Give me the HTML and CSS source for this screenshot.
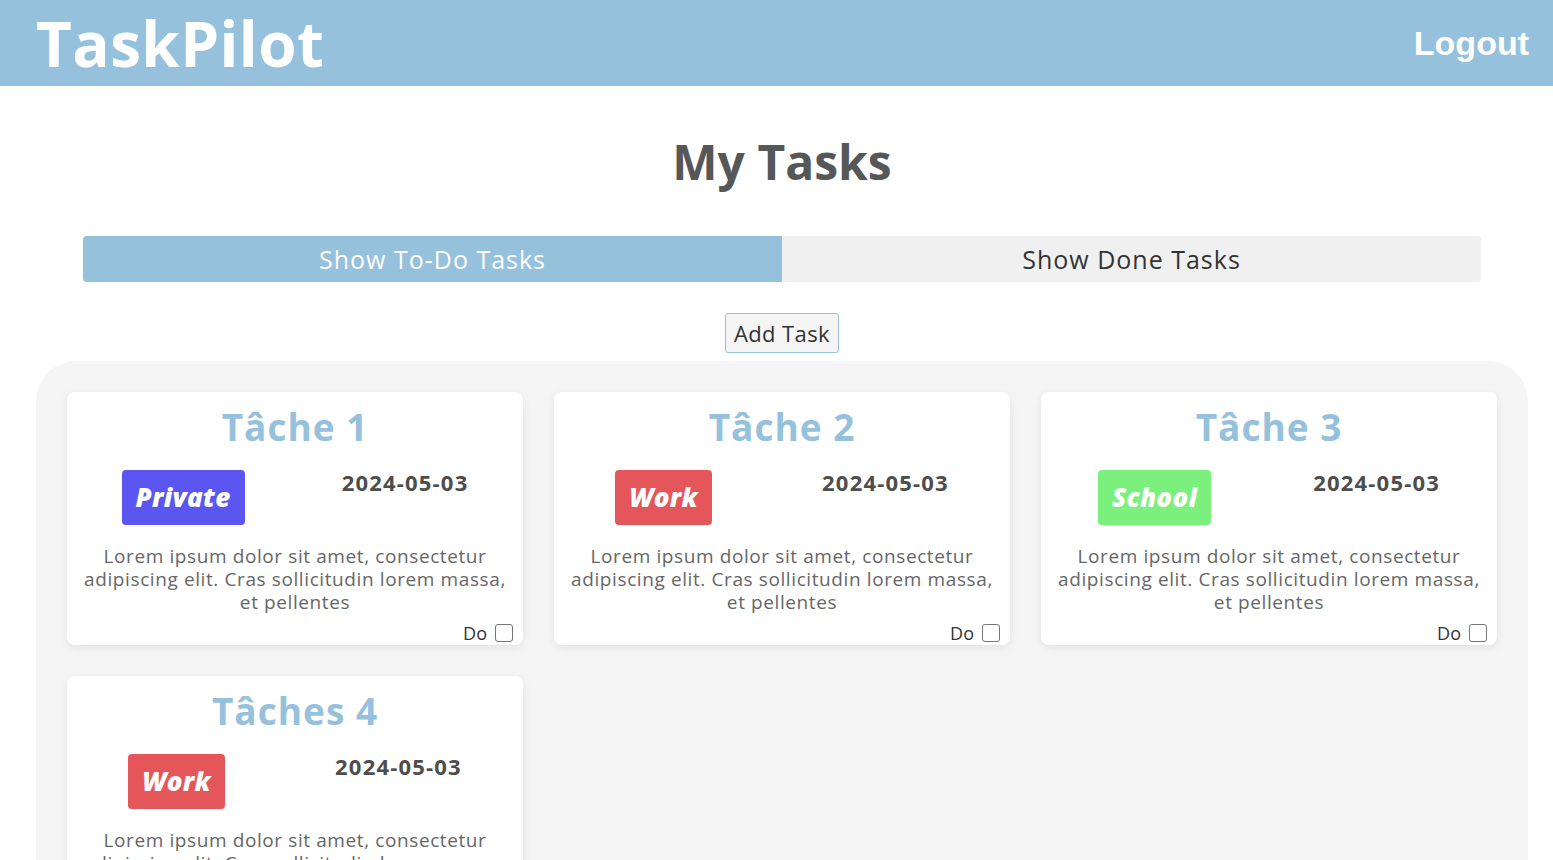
FILE: index.html
```html
<!DOCTYPE html>
<html lang="fr">
<head>
<meta charset="utf-8">
<title>TaskPilot</title>
<link rel="stylesheet" href="styles.css">
</head>
<body>
<header class="topbar">
  <h1 class="brand">TaskPilot</h1>
  <button class="logout" type="button">Logout</button>
</header>
<main class="page">
  <h2 class="page-title">My Tasks</h2>
  <div class="tabs">
    <button class="tab tab-active" type="button">Show To-Do Tasks</button>
    <button class="tab" type="button">Show Done Tasks</button>
  </div>
  <div class="add-row">
    <button class="add-btn" type="button">Add Task</button>
  </div>
  <section class="board">
    <article class="card">
      <h3 class="card-title">Tâche 1</h3>
      <div class="meta">
        <span class="badge badge-private">Private</span>
        <span class="date">2024-05-03</span>
      </div>
      <p class="desc">Lorem ipsum dolor sit amet, consectetur adipiscing elit. Cras sollicitudin lorem massa, et pellentes</p>
      <label class="done"><span>Do</span><input type="checkbox" class="check"></label>
    </article>
    <article class="card">
      <h3 class="card-title">Tâche 2</h3>
      <div class="meta">
        <span class="badge badge-work">Work</span>
        <span class="date">2024-05-03</span>
      </div>
      <p class="desc">Lorem ipsum dolor sit amet, consectetur adipiscing elit. Cras sollicitudin lorem massa, et pellentes</p>
      <label class="done"><span>Do</span><input type="checkbox" class="check"></label>
    </article>
    <article class="card">
      <h3 class="card-title">Tâche 3</h3>
      <div class="meta">
        <span class="badge badge-school">School</span>
        <span class="date">2024-05-03</span>
      </div>
      <p class="desc">Lorem ipsum dolor sit amet, consectetur adipiscing elit. Cras sollicitudin lorem massa, et pellentes</p>
      <label class="done"><span>Do</span><input type="checkbox" class="check"></label>
    </article>
    <article class="card">
      <h3 class="card-title">Tâches 4</h3>
      <div class="meta">
        <span class="badge badge-work">Work</span>
        <span class="date">2024-05-03</span>
      </div>
      <p class="desc">Lorem ipsum dolor sit amet, consectetur adipiscing elit. Cras sollicitudin lorem massa, et pellentes</p>
      <label class="done"><span>Do</span><input type="checkbox" class="check"></label>
    </article>
  </section>
</main>
</body>
</html>
```

FILE: styles.css
```css
* { box-sizing: border-box; }

html, body {
  margin: 0;
  padding: 0;
  background: #ffffff;
}

body {
  font-family: "Open Sans", "Noto Sans", sans-serif;
  color: #333;
  overflow: hidden;
}

.topbar {
  height: 86px;
  background: #96c1dc;
  display: flex;
  align-items: center;
  justify-content: space-between;
  padding: 0 24px 0 36px;
}

.brand {
  margin: 0;
  color: #fff;
  font-size: 62px;
  font-weight: 700;
  line-height: 1;
  letter-spacing: 0.4px;
}

.logout {
  background: none;
  border: 0;
  padding: 0;
  color: #fff;
  font-family: "Liberation Sans", Arial, sans-serif;
  font-weight: 700;
  font-size: 34px;
  cursor: pointer;
}

.page {
  padding-left: 11px;
}

.page-title {
  margin: 0;
  padding-top: 48px;
  text-align: center;
  font-size: 48px;
  line-height: 56px;
  font-weight: 700;
  color: #555759;
}

.tabs {
  margin: 46px 72px 0;
  display: flex;
  height: 46px;
  border-radius: 4px;
  overflow: hidden;
  background: #f0f0f0;
}

.tab {
  flex: 1;
  border: 0;
  background: #f0f0f0;
  color: #333;
  font-family: inherit;
  font-size: 25px;
  letter-spacing: 1px;
  padding: 0;
}

.tab-active {
  background: #96c1dc;
  color: #fff;
}

.add-row {
  display: flex;
  justify-content: center;
  margin-top: 31px;
}

.add-btn {
  height: 40px;
  padding: 0 8px;
  background: #f5f5f5;
  border: 1px solid #96c1dc;
  border-radius: 3px;
  color: #333;
  font-family: inherit;
  font-size: 22px;
  letter-spacing: 0.4px;
}

.board {
  margin: 8px 25px 0;
  background: #f5f5f5;
  border-radius: 40px;
  padding: 31px;
  display: grid;
  grid-template-columns: repeat(3, 456px);
  gap: 31px;
  min-height: 600px;
  align-content: start;
}

.card {
  background: #fff;
  border-radius: 8px;
  box-shadow: 0 3px 10px rgba(0, 0, 0, 0.08);
  padding: 13px 16px 3px;
  display: flex;
  flex-direction: column;
}

.card-title {
  margin: 0;
  text-align: center;
  color: #96c1dc;
  font-size: 37px;
  line-height: 44px;
  font-weight: 700;
  letter-spacing: 1px;
}

.meta {
  margin: 21px -10px 0;
  display: flex;
  justify-content: space-around;
  align-items: flex-start;
}

.badge {
  display: inline-block;
  height: 55px;
  line-height: 55px;
  padding: 0 14px;
  border-radius: 4px;
  color: #fff;
  font-size: 26px;
  font-weight: 800;
  font-style: italic;
  letter-spacing: 0.3px;
}

.badge-private { background: #5b55f1; }
.badge-work { background: #e5565a; }
.badge-school { background: #7cf07c; }

.date {
  font-size: 22px;
  line-height: 24px;
  font-weight: 700;
  letter-spacing: 1.2px;
  color: #4d4d4d;
}

.desc {
  margin: 20px 0 0;
  text-align: center;
  font-size: 19px;
  line-height: 23px;
  letter-spacing: 0.6px;
  color: #666;
}

.done {
  margin: 10px -6px 0 0;
  display: flex;
  justify-content: flex-end;
  align-items: center;
  gap: 8px;
  font-size: 18px;
  line-height: 18px;
  color: #333;
}

.check {
  appearance: none;
  -webkit-appearance: none;
  margin: 0;
  width: 18px;
  height: 18px;
  border: 1.5px solid #767676;
  border-radius: 3px;
  background: #fff;
}
```
